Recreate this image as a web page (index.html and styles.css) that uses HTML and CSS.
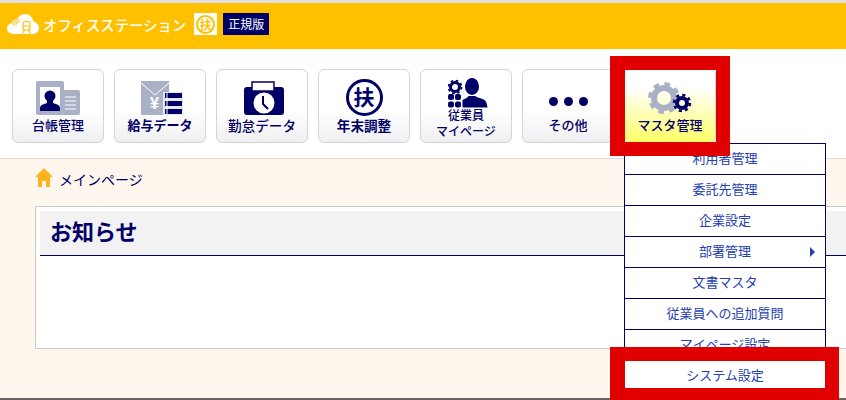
FILE: index.html
```html
<!DOCTYPE html>
<html lang="ja">

<head>
  <meta http-equiv="Content-Type" content="text/html; charset=UTF-8">
  <title>オフィスステーション</title>
  <link rel="stylesheet" href="styles.css">
</head>

<body>
  <div class="page">
    <header class="topbar">
      <svg class="logo-cloud" width="32" height="20" viewBox="0 0 32 20">
        <path fill="#fff" d="M7 20C3 20 0 17.600 0 14.500 0 11.700 2.200 9.600 5 9.200 5.600 6.600 7.800 5 10 5.200 11.800 2 14.500 0 18 0c4.400 0 8 3.200 8.300 7.600C29.500 8.300 32 10.800 32 14c0 3.400-2.700 6-6.200 6z" />
        <rect x="16" y="7.500" width="7" height="8.500" rx="2" fill="none" stroke="#ffc000" stroke-width="1.200" />
        <path stroke="#ffc000" stroke-width="1.200" fill="none" d="M16.500 12h6M17.500 16l-2 3.500M21.500 16l2 3.500" />
        <path stroke="#ffc000" stroke-width="1.200" fill="none" d="M9 11c0-2 1.500-3.500 3.500-3.500M6.500 11.500c0-3.500 2.500-6 6-6" />
      </svg>
      <span class="logo-name">オフィスステーション</span>
      <span class="logo-badge"><span class="logo-fu">扶</span></span>
      <span class="edition">正規版</span>
    </header>

    <nav class="menubar">
      <a class="tile">
        <span class="tile-icon">
          <svg width="44" height="34" viewBox="0 0 44 34">
            <rect x="24" y="9" width="20" height="25" rx="2" fill="#aab1c6" />
            <path stroke="#fff" stroke-width="1" d="M29 16h11M29 20h11M29 24h11M29 28h11" />
            <rect width="28" height="34" rx="2" fill="#aab1c6" />
            <rect x="4" y="6" width="20" height="24" fill="#fff" />
            <circle cx="14" cy="15" r="5.500" fill="#000066" />
            <path fill="#000066" d="M4 30v-3c0-3 4-4 7-5v-3h6v3c3 1 7 2 7 5v3z" />
          </svg>
        </span>
        <span class="tile-label">台帳管理</span>
      </a>
      <a class="tile">
        <span class="tile-icon">
          <svg class="icon-shift" width="42" height="34" viewBox="0 0 42 34">
            <rect width="28" height="34" fill="#aab1c6" />
            <path stroke="#fff" stroke-width="1" fill="none" d="M0 2l14 12L28 2" />
            <text x="13.500" y="28" class="yen-mark">¥</text>
            <rect x="22" y="11" width="20" height="23" fill="#e4e6ee" />
            <path stroke="#000066" stroke-width="5" d="M24 14.500h17M24 22.500h17M24 30.500h17" />
            <path stroke="#fff" stroke-width="1" d="M26 12v21" />
          </svg>
        </span>
        <span class="tile-label tile-label-bold">給与データ</span>
      </a>
      <a class="tile">
        <span class="tile-icon">
          <svg class="icon-shift" width="40" height="34" viewBox="0 0 40 34">
            <rect y="6" width="40" height="28" rx="3" fill="#000066" />
            <rect x="8" y="1" width="22" height="9" fill="#fff" stroke="#000066" stroke-width="1.500" />
            <circle cx="20" cy="22" r="10.500" fill="#fff" />
            <path stroke="#000066" stroke-width="2" fill="none" d="M19 15v8l5 5" />
          </svg>
        </span>
        <span class="tile-label tile-label-wide">勤怠データ</span>
      </a>
      <a class="tile">
        <span class="tile-icon">
          <span class="fu-circle">扶</span>
        </span>
        <span class="tile-label tile-label-bold tile-label-wide">年末調整</span>
      </a>
      <a class="tile tile-two">
        <span class="tile-icon">
          <svg width="40" height="30" viewBox="0 0 40 30">
            <circle cx="7" cy="9" r="4.500" fill="none" stroke="#000066" stroke-width="3" />
            <circle cx="7" cy="9" r="6.500" fill="none" stroke="#000066" stroke-width="1.800" stroke-dasharray="2.500 2.600" />
            <rect x="0" y="16" width="6" height="6" rx="2" fill="#000066" />
            <rect x="7" y="16" width="6" height="6" rx="2" fill="#000066" />
            <rect x="0" y="23.500" width="6" height="6" rx="2" fill="#000066" />
            <rect x="7" y="23.500" width="6" height="6" rx="2" fill="#000066" />
            <ellipse cx="24" cy="8.500" rx="7" ry="8.500" fill="#000066" />
            <path fill="#000066" d="M14.500 29.500V22c3-1.500 5.500-2.500 6-4h7c.5 1.500 6 2 9 4 1.500 1 2.500 4 3 7.500z" />
          </svg>
        </span>
        <span class="tile-label tile-label-small">従業員<br>マイページ</span>
      </a>
      <a class="tile">
        <span class="tile-icon">
          <span class="dots"><i></i><i></i><i></i></span>
        </span>
        <span class="tile-label">その他</span>
      </a>
      <a class="tile tile-active">
        <span class="tile-icon">
          <svg width="44" height="32" viewBox="0 0 44 32">
            <circle cx="16" cy="16" r="10" fill="none" stroke="#aab1c6" stroke-width="6" />
            <circle cx="16" cy="16" r="14" fill="none" stroke="#aab1c6" stroke-width="4" stroke-dasharray="5.500 5.500" />
            <circle cx="34" cy="21" r="5" fill="none" stroke="#000066" stroke-width="4" />
            <circle cx="34" cy="21" r="8" fill="none" stroke="#000066" stroke-width="2.500" stroke-dasharray="3.200 3.080" />
          </svg>
        </span>
        <span class="tile-label">マスタ管理</span>
      </a>
    </nav>

    <main class="content">
      <div class="crumbs">
        <svg width="18" height="19" viewBox="0 0 18 19">
          <path fill="#ffb31a" d="M9 0l9 9h-3v10h-4v-6H7v6H3V9H0z" />
        </svg>
        <span class="crumb-text">メインページ</span>
      </div>
      <section class="notice">
        <h2 class="notice-title">お知らせ</h2>
      </section>
    </main>
    <div class="footer-line"></div>

    <ul class="dropdown">
      <li>利用者管理</li>
      <li>委託先管理</li>
      <li>企業設定</li>
      <li class="has-sub">部署管理</li>
      <li>文書マスタ</li>
      <li>従業員への追加質問</li>
      <li>マイページ設定</li>
      <li>システム設定</li>
    </ul>

    <!-- red marks from the manual -->
    <div class="mark mark-tile"></div>
    <div class="mark mark-item"></div>
  </div>
</body>

</html>
```

FILE: styles.css
```css
body {
  margin: 0;
  font-family: "Noto Sans CJK JP", "Noto Sans", sans-serif;
  color: #000066;
}

.page {
  position: relative;
  width: 846px;
  height: 400px;
  overflow: hidden;
  display: flex;
  flex-direction: column;
}

.topbar {
  display: flex;
  align-items: center;
  height: 42px;
  flex-shrink: 0;
  border-top: 3px solid #e0e0e0;
  background: #ffc000;
  padding: 0 0 4px 7px;
}

.logo-name {
  margin-left: 4px;
  font-size: 14.400px;
  font-weight: 500;
  color: #fff;
}

.logo-badge {
  display: flex;
  align-items: center;
  justify-content: center;
  width: 23px;
  height: 22px;
  margin-left: 8px;
  background: #fff;
}

.logo-fu {
  width: 19px;
  height: 19px;
  border: 2px solid #ffc000;
  border-radius: 50%;
  box-sizing: border-box;
  font-size: 12px;
  font-weight: 700;
  line-height: 15px;
  text-align: center;
  color: #ffc000;
}

.edition {
  margin-left: 6px;
  padding: 0 5px;
  height: 22px;
  line-height: 22px;
  font-size: 12px;
  color: #fff;
  background: #000066;
}

.menubar {
  display: flex;
  gap: 10px;
  height: 110px;
  flex-shrink: 0;
  box-sizing: border-box;
  padding: 20px 12px 0;
  background: #fff;
  border-bottom: 1px solid #e0dfdc;
}

.tile {
  display: flex;
  flex-direction: column;
  align-items: center;
  width: 92px;
  height: 74px;
  box-sizing: border-box;
  border: 1px solid #d5d5d5;
  border-radius: 6px;
  background: linear-gradient(#fff 55%, #f0f0f2);
}

.tile-icon {
  display: flex;
  align-items: center;
  justify-content: center;
  height: 45px;
  flex-shrink: 0;
  padding-top: 10px;
  box-sizing: border-box;
}

.icon-shift {
  margin-left: 4px;
}

.tile-label {
  font-size: 13px;
  line-height: 20px;
  font-weight: 500;
  white-space: nowrap;
}

.tile-label-bold {
  font-weight: 700;
}

.tile-label-wide {
  font-size: 13.600px;
}

.tile-label-small {
  margin-top: -3px;
  font-size: 12px;
  line-height: 16px;
  font-weight: 500;
  text-align: center;
}

.tile-two .tile-icon {
  padding: 5px 0 0 4px;
  height: 40px;
}

.tile-active {
  background: linear-gradient(#fff 25%, #ffff66);
}

.yen-mark {
  font-family: "Liberation Sans", sans-serif;
  font-size: 17px;
  font-weight: 700;
  fill: #fff;
  text-anchor: middle;
}

.fu-circle {
  display: block;
  width: 37px;
  height: 37px;
  box-sizing: border-box;
  border: 3.500px solid #000066;
  border-radius: 50%;
  font-size: 21px;
  font-weight: 700;
  line-height: 28px;
  text-align: center;
}

.dots {
  display: flex;
  gap: 6px;
  margin-top: 8px;
}

.dots i {
  width: 9px;
  height: 9px;
  border-radius: 50%;
  background: #000066;
}

.content {
  flex: 1;
  background: #fff7ee;
  padding: 8px 0 0 35px;
}

.crumbs {
  display: flex;
  align-items: center;
  gap: 6px;
  height: 20px;
  font-size: 14px;
}

.crumb-text {
  margin-top: 3px;
}

.notice {
  height: 143px;
  margin-top: 19px;
  box-sizing: border-box;
  border: 1px solid #cccccc;
  border-right: 0;
  background: #fff;
  padding: 4px 0 0 4px;
}

.notice-title {
  margin: 0;
  height: 45px;
  box-sizing: border-box;
  padding-left: 10px;
  font-size: 22px;
  font-weight: 700;
  line-height: 38px;
  background: #f2f2f2;
  border-bottom: 1px solid #000066;
}

.footer-line {
  height: 2px;
  flex-shrink: 0;
  background: #666;
}

.dropdown {
  position: absolute;
  left: 624px;
  top: 143px;
  width: 202px;
  box-sizing: border-box;
  margin: 0;
  padding: 0;
  list-style: none;
  background: #fff;
  border-left: 1px solid #000066;
  border-right: 1px solid #000066;
  border-top: 1px solid #000066;
}

.dropdown li {
  position: relative;
  height: 31px;
  box-sizing: border-box;
  border-bottom: 1px solid #000066;
  font-size: 13px;
  line-height: 27px;
  text-align: center;
  color: #2440b0;
}

.has-sub::after {
  content: "";
  position: absolute;
  right: 10px;
  top: 10px;
  border-left: 5px solid #2440b0;
  border-top: 5px solid transparent;
  border-bottom: 5px solid transparent;
}

.mark {
  position: absolute;
  box-sizing: border-box;
  border: 14px solid #e00000;
}

.mark-tile {
  left: 610px;
  top: 56px;
  width: 120px;
  height: 100px;
  border-left-width: 15px;
}

.mark-item {
  left: 610px;
  top: 347px;
  width: 229px;
  height: 53px;
  border-left-width: 15px;
  border-bottom-width: 12px;
}
```
